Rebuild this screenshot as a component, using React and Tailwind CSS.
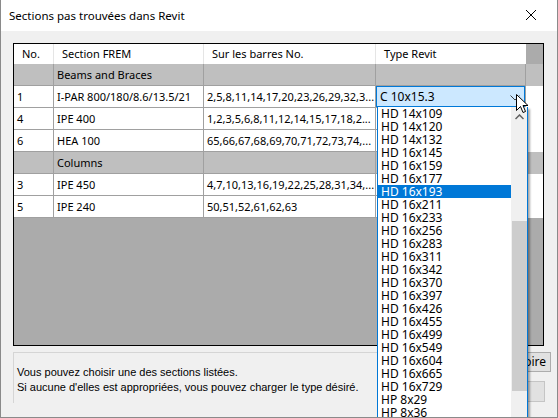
import React from 'react';

const rows = [
  { group: 'Beams and Braces' },
  { no: '1', sec: 'I-PAR 800/180/8.6/13.5/21', bars: '2,5,8,11,14,17,20,23,26,29,32,3...', combo: true },
  { no: '4', sec: 'IPE 400', bars: '1,2,3,5,6,8,11,12,14,15,17,18,2...' },
  { no: '6', sec: 'HEA 100', bars: '65,66,67,68,69,70,71,72,73,74,...' },
  { group: 'Columns' },
  { no: '3', sec: 'IPE 450', bars: '4,7,10,13,16,19,22,25,28,31,34,...' },
  { no: '5', sec: 'IPE 240', bars: '50,51,52,61,62,63' },
];

const items = [
  'HD 14x109', 'HD 14x120', 'HD 14x132', 'HD 16x145', 'HD 16x159', 'HD 16x177', 'HD 16x193',
  'HD 16x211', 'HD 16x233', 'HD 16x256', 'HD 16x283', 'HD 16x311', 'HD 16x342', 'HD 16x370',
  'HD 16x397', 'HD 16x426', 'HD 16x455', 'HD 16x499', 'HD 16x549', 'HD 16x604', 'HD 16x665',
  'HD 16x729', 'HP 8x29', 'HP 8x36',
];

const cell = 'h-[22px] flex items-center px-[3px] pt-[2px] border-r border-b border-[#a0a0a0] whitespace-nowrap overflow-hidden';

function Row({ r }) {
  if (r.group) {
    return (
      <div className="flex bg-[#bfbfbf]">
        <div className={`${cell} w-[40px]`}></div>
        <div className={`${cell} w-[150px]`}>{r.group}</div>
        <div className={`${cell} w-[172px]`}></div>
        <div className={`${cell} w-[150px]`}></div>
      </div>
    );
  }
  return (
    <div className="flex bg-white">
      <div className={`${cell} w-[40px]`}>{r.no}</div>
      <div className={`${cell} w-[150px]`}>{r.sec}</div>
      <div className={`${cell} w-[172px]`}>{r.bars}</div>
      {r.combo ? (
        <div className="h-[22px] w-[150px] border-r border-b border-[#a0a0a0]">
          <div className="w-full h-[21px] bg-[#cce8ff] border border-[#0078d7] flex items-center pl-[3px] pt-[1px] text-[12px]">
            C 10x15.3
          </div>
        </div>
      ) : (
        <div className={`${cell} w-[150px]`}></div>
      )}
    </div>
  );
}

export default function App() {
  return (
    <div className="relative w-[558px] h-[418px] bg-[#f0f0f0] border-l border-r border-b border-[#8a8a8a] overflow-hidden text-[#000] font-['Noto_Sans',sans-serif]">
      {/* Title bar */}
      <div className="h-[31px] bg-white flex items-center justify-between pl-[8px] pr-[20px]">
        <span className="text-[11.5px] pt-[1px]">Sections pas trouvées dans Revit</span>
        <svg width="12" height="12" viewBox="0 0 12 12" className="mt-[-1px]">
          <path d="M1 1 L11 11 M11 1 L1 11" stroke="#000" strokeWidth="1" />
        </svg>
      </div>

      {/* Grid */}
      <div className="ml-[12px] mt-[12px] w-[531px] h-[303px] border border-black bg-[#ababab] text-[11px]">
        <div className="flex bg-white w-[512px] h-[20px] text-[11px]">
          <div className="w-[40px] border-r border-[#e5e5e5] flex items-center pl-[8px] pt-[1px]">No.</div>
          <div className="w-[150px] border-r border-[#e5e5e5] flex items-center pl-[8px] pt-[1px]">Section FREM</div>
          <div className="w-[172px] border-r border-[#e5e5e5] flex items-center pl-[8px] pt-[1px]">Sur les barres No.</div>
          <div className="w-[150px] flex items-center pl-[8px] pt-[1px]">Type Revit</div>
        </div>
        {rows.map((r, i) => (
          <Row key={i} r={r} />
        ))}
      </div>

      {/* Bottom area */}
      <div className="flex mt-[6px] ml-[12px]">
        <div className="w-[500px] h-[51px] border-t border-l border-[#d5d5d5] pl-[3px] pt-[12px] font-['Liberation_Sans',sans-serif] text-[11px] leading-[15px]">
          <div>Vous pouvez choisir une des sections listées.</div>
          <div>Si aucune d'elles est appropriées, vous pouvez charger le type désiré.</div>
        </div>
        <div className="flex flex-col ml-[8px] gap-[9px] text-[12px]">
          <div className="w-[30px] h-[20px] bg-[#e1e1e1] border border-[#adadad] flex items-center justify-end pr-[4px] overflow-hidden">oire</div>
          <div className="w-[24px] h-[21px] bg-[#e1e1e1] border border-[#c5c5c5]"></div>
        </div>
      </div>

      {/* Combo chevron */}
      <svg width="10" height="6" viewBox="0 0 10 6" className="absolute left-[509px] top-[95px]">
        <path d="M0.5 0.5 L5 5 L9.5 0.5" stroke="#404040" strokeWidth="1" fill="none" />
      </svg>

      {/* Dropdown list */}
      <div className="absolute left-[376px] top-[107px] w-[151px] h-[311px] bg-white border-l border-r border-[#0078d7] shadow-[2px_2px_2px_rgba(0,0,0,0.35)] flex">
        <div className="flex-1 flex flex-col text-[12px]">
          {items.map((it, i) => (
            <div
              key={it}
              className={`h-[13px] leading-[13px] pl-[3px] whitespace-nowrap ${i === 6 ? 'bg-[#0078d7] text-white' : ''}`}
            >
              {it}
            </div>
          ))}
        </div>
        <div className="w-[16px] bg-[#f0f0f0] flex flex-col items-center">
          <svg width="9" height="6" viewBox="0 0 9 6" className="mt-[7px]">
            <path d="M0.5 5 L4.5 1 L8.5 5" stroke="#606060" strokeWidth="1.5" fill="none" />
          </svg>
          <div className="mt-[101px] w-[15px] h-[170px] bg-[#cdcdcd]"></div>
        </div>
      </div>

      {/* Mouse cursor */}
      <svg width="13" height="21" viewBox="0 0 13 21" className="absolute left-[515px] top-[94px]">
        <path
          d="M0.5 0.5 L0.5 16.5 L4.5 12.5 L7 18.5 L9.5 17.5 L7 11.5 L12 11.5 Z"
          fill="#fff"
          stroke="#000"
          strokeWidth="1"
          strokeLinejoin="miter"
        />
      </svg>
    </div>
  );
}
